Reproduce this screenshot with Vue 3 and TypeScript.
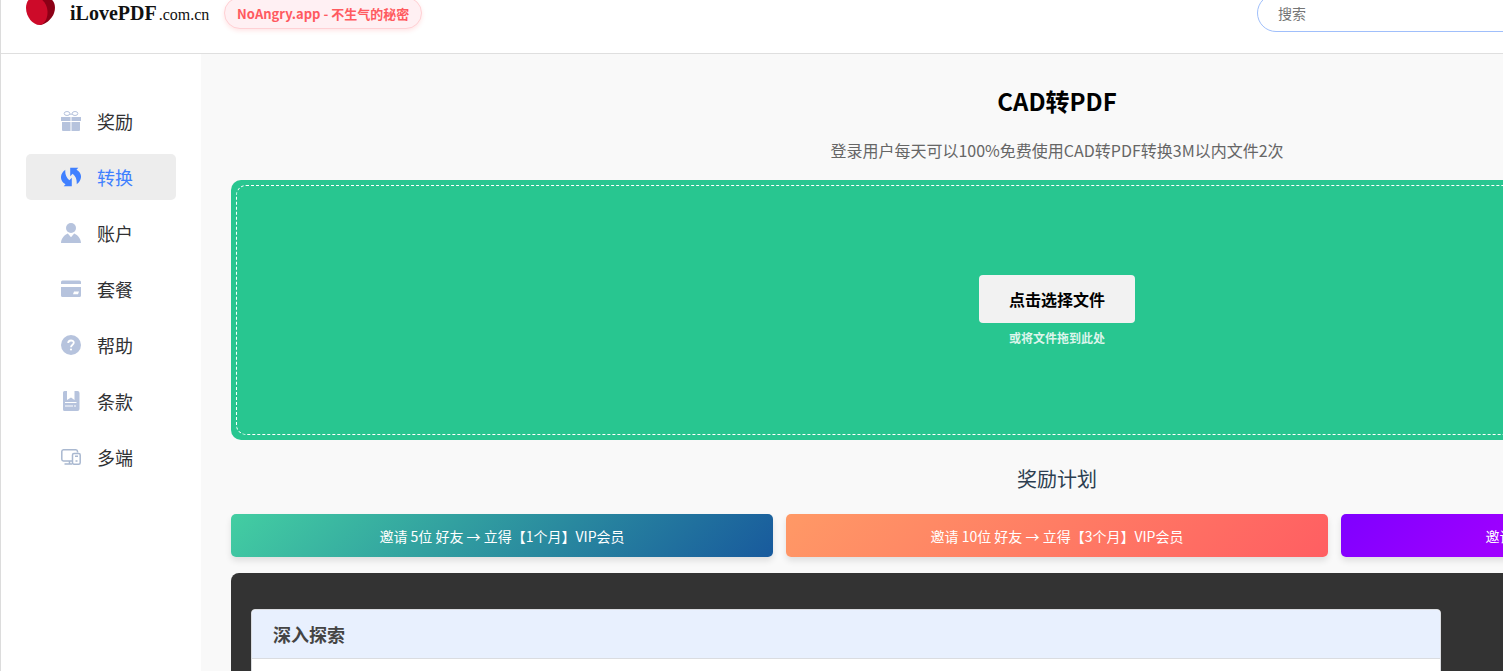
<script setup lang="ts">
import { ref } from 'vue'

interface MenuItem {
  id: string
  label: string
}

const menu: MenuItem[] = [
  { id: 'gift', label: '奖励' },
  { id: 'convert', label: '转换' },
  { id: 'user', label: '账户' },
  { id: 'card', label: '套餐' },
  { id: 'help', label: '帮助' },
  { id: 'terms', label: '条款' },
  { id: 'devices', label: '多端' },
]

const rewards = [
  { tone: 'teal', text: '邀请 5位 好友 → 立得【1个月】VIP会员' },
  { tone: 'coral', text: '邀请 10位 好友 → 立得【3个月】VIP会员' },
  { tone: 'violet', text: '邀请 20位 好友 → 立得【6个月】VIP会员' },
]

const active = ref('convert')
const keyword = ref('')
</script>

<template>
  <div class="viewport">
    <div class="page">
      <header class="header">
        <a class="brand" href="#">
          <svg class="brand-mark" viewBox="0 0 30 32" aria-hidden="true">
            <path fill="#8c0016" d="M15 6C18 3 24 3 27 7C30 11 29.500 18 26 23C23 27.500 18 30.500 14 31L10 20Z" />
            <path fill="#cd0a29" d="M0 14C0 7 4 3 9 3C15 3 21 9 21.500 17C22 25 18 31 13.500 31C7 31 0 23 0 14Z" />
          </svg>
          <span class="brand-name">iLovePDF<small>.com.cn</small></span>
        </a>
        <a class="promo" href="#">NoAngry.app - 不生气的秘密</a>
        <input v-model="keyword" class="search" type="search" placeholder="搜索" aria-label="搜索" />
      </header>

      <div class="body">
        <nav class="sidebar">
          <a
            v-for="item in menu"
            :key="item.id"
            href="#"
            class="menu-item"
            :class="{ active: item.id === active }"
            @click.prevent="active = item.id"
          >
            <svg class="menu-icon" viewBox="0 0 20 20" fill="currentColor" aria-hidden="true">
              <template v-if="item.id === 'gift'">
                <g fill="none" stroke="currentColor" stroke-width="1">
                  <ellipse cx="6" cy="2.500" rx="2.800" ry="2" />
                  <ellipse cx="14" cy="2.500" rx="2.800" ry="2" />
                  <path d="M8.500 3.200h3" />
                </g>
                <path d="M0 6h9.500v4H.500a.5.5 0 0 1-.5-.5ZM10.500 6H20v3.500a.5.5 0 0 1-.5.500h-9ZM1 11h8.500v9H2a1 1 0 0 1-1-1ZM10.500 11H19v8a1 1 0 0 1-1 1h-7.500Z" />
              </template>
              <template v-else-if="item.id === 'convert'">
                <path d="M4.300 2.700C-1.500 7-1.500 14 4.500 17.200L2.700 19.300H10.800V10.700L8.300 13.200C5 10.500 4 7 4.300 2.700Z" />
                <path d="M15.700 17.300C21.500 13 21.500 6 15.500 2.800L17.300.7H9.200V9.300L11.700 6.800C15 9.500 16 13 15.700 17.300Z" />
              </template>
              <template v-else-if="item.id === 'user'">
                <circle cx="10" cy="5" r="5" />
                <path d="M0 20C.3 15.500 3 12 6.800 10.500L10 14.200l3.200-3.700C17 12 19.700 15.500 20 20Z" />
              </template>
              <template v-else-if="item.id === 'card'">
                <path d="M0 5V3a1.500 1.500 0 0 1 1.500-1.500h17A1.500 1.500 0 0 1 20 3v2Z" />
                <path fill-rule="evenodd" d="M0 8h20v8.500a1.500 1.500 0 0 1-1.500 1.500h-17A1.500 1.500 0 0 1 0 16.500ZM13 12.500l-1 2.800h5l1-2.800Z" />
              </template>
              <template v-else-if="item.id === 'help'">
                <circle cx="10" cy="10" r="10" />
                <path fill="none" stroke="#fff" stroke-width="1.800" d="M7.200 8C7.200 4.700 12.800 4.700 12.800 7.800C12.800 9.800 10 9.800 10 12.200" />
                <circle cx="10" cy="14.500" r="1.100" fill="#fff" />
              </template>
              <template v-else-if="item.id === 'terms'">
                <path d="M3.500 0H6v9l4-2.500L13.500 9V0h3A2 2 0 0 1 18.500 2v16a2 2 0 0 1-2 2h-13A1.500 1.500 0 0 1 2 18.500v-17A1.500 1.500 0 0 1 3.500 0Z" />
                <path fill="none" stroke="#fff" stroke-width="1" d="M4 11.500h11.500M4 15h8M13 15h2" />
              </template>
              <template v-else>
                <g fill="none" stroke="#a9b8d0" stroke-width="1.500">
                  <path d="M11 14H2.500A1.800 1.800 0 0 1 .8 12.200V4.500a1.800 1.800 0 0 1 1.700-1.800h12.300A1.800 1.800 0 0 1 16.500 4.500v1M3.500 17h7.500M8.500 14v3" />
                  <rect x="11.500" y="6.500" width="7.700" height="10.700" rx="1.500" />
                  <path d="M14 9.200h3M14.500 14h2" />
                </g>
              </template>
            </svg>
            <span>{{ item.label }}</span>
          </a>
        </nav>

        <main class="content">
          <h1>CAD转PDF</h1>
          <p class="intro">登录用户每天可以100%免费使用CAD转PDF转换3M以内文件2次</p>

          <section class="dropzone">
            <div class="dropzone-inner">
              <button type="button" class="pick">点击选择文件</button>
              <p class="hint">或将文件拖到此处</p>
            </div>
          </section>

          <h2>奖励计划</h2>
          <div class="rewards">
            <a v-for="reward in rewards" :key="reward.tone" href="#" class="reward" :class="reward.tone">{{ reward.text }}</a>
          </div>

          <section class="explore">
            <article class="panel">
              <h3>深入探索</h3>
              <div class="panel-body"></div>
            </article>
          </section>
        </main>
      </div>
    </div>
  </div>
</template>

<style>
body {
  margin: 0;
  overflow: hidden;
}
</style>

<style scoped>
.viewport {
  height: 100vh;
  overflow: hidden;
  font-family: "Noto Sans CJK SC", sans-serif;
  background: #f9f9f9;
}

.page {
  min-width: 1913px;
  box-sizing: border-box;
  border-left: 1px solid #dcdcdc;
}

.page * {
  box-sizing: border-box;
}

a {
  color: inherit;
  text-decoration: none;
}

.header {
  display: flex;
  align-items: center;
  height: 81px;
  margin-top: -27px;
  padding: 0 30px 0 25px;
  border-bottom: 1px solid #dfdfdf;
  background: #fff;
}

.brand {
  display: flex;
  align-items: center;
  gap: 14px;
  width: 186px;
  margin-right: 12px;
}

.brand-mark {
  flex: none;
  width: 30px;
  height: 32px;
  margin-bottom: 6px;
}

.brand-name {
  font-family: "Liberation Serif", serif;
  font-size: 20px;
  font-weight: 700;
  color: #111;
  white-space: nowrap;
}

.brand-name small {
  margin-left: 2px;
  font-size: 16px;
  font-weight: 400;
}

.promo {
  padding: 6px 12px 4px;
  border: 1px solid #ffd0d4;
  border-radius: 20px;
  background: #fff0f3;
  box-shadow: 0 2px 4px rgba(255, 90, 95, 0.15);
  color: #ff5a5f;
  font-size: 13px;
  font-weight: 700;
  line-height: 20px;
  white-space: nowrap;
}

.search {
  width: 500px;
  height: 38px;
  margin-left: auto;
  margin-right: 126px;
  padding: 0 20px;
  border: 1px solid #a0bffb;
  border-radius: 19px;
  outline: none;
  background: #fff;
  font: 14px "Noto Sans CJK SC", sans-serif;
  color: #333;
}

.search::placeholder {
  color: #757575;
}

.body {
  display: flex;
}

.sidebar {
  display: flex;
  flex: none;
  flex-direction: column;
  gap: 10px;
  width: 200px;
  min-height: 100vh;
  padding: 44px 25px;
  background: #fff;
}

.menu-item {
  display: flex;
  align-items: center;
  gap: 16px;
  height: 46px;
  padding-left: 35px;
  border-radius: 5px;
  color: #303133;
  font-size: 18px;
}

.menu-icon {
  width: 20px;
  height: 20px;
  color: #b6c3dd;
}

.menu-item.active {
  background: #ededed;
  color: #4080ff;
}

.menu-item.active .menu-icon {
  color: #4080ff;
}

.content {
  flex: 1;
  min-width: 0;
  padding: 29px 30px;
}

h1,
h2,
h3,
p {
  margin: 0;
}

h1 {
  color: #000;
  font-size: 24px;
  font-weight: 700;
  line-height: 36px;
  text-align: center;
}

.intro {
  margin-top: 19px;
  color: #666;
  font-size: 16px;
  line-height: 24px;
  text-align: center;
}

.dropzone {
  height: 260px;
  margin-top: 18px;
  padding: 5px;
  border-radius: 10px;
  background: #28c690;
}

.dropzone-inner {
  display: flex;
  flex-direction: column;
  align-items: center;
  justify-content: center;
  gap: 6px;
  height: 100%;
  padding-top: 2px;
  border: 1px dashed #fff;
  border-radius: 10px;
}

.pick {
  height: 48px;
  padding: 0 30px;
  border: 0;
  border-radius: 4px;
  background: #f2f2f2;
  color: #000;
  font: 700 16px "Noto Sans CJK SC", sans-serif;
}

.hint {
  color: #dcf5eb;
  font-size: 12px;
  font-weight: 700;
  line-height: 18px;
}

h2 {
  margin-top: 24px;
  color: #2c3e50;
  font-size: 20px;
  font-weight: 400;
  line-height: 30px;
  text-align: center;
}

.rewards {
  display: grid;
  grid-template-columns: repeat(3, 1fr);
  gap: 13px;
  margin-top: 20px;
}

.reward {
  padding: 11px 10px 9px;
  border-radius: 5px;
  box-shadow: 0 4px 6px rgba(0, 0, 0, 0.1);
  color: #fff;
  font-size: 14px;
  line-height: 23px;
  text-align: center;
}

.teal {
  background: linear-gradient(135deg, #43cea2, #185a9d);
}

.coral {
  background: linear-gradient(135deg, #ff9966, #ff5e62);
}

.violet {
  background: linear-gradient(135deg, #7f00ff, #e100ff);
}

.explore {
  margin-top: 16px;
  padding: 36px 20px;
  border-radius: 8px;
  background: #333;
}

.panel {
  max-width: 1190px;
  overflow: hidden;
  border: 1px solid #dadce0;
  border-radius: 4px;
  background: #fff;
}

h3 {
  padding: 10px 21px 9px;
  border-bottom: 1px solid #dadce0;
  background: #e8f0fe;
  color: #444;
  font-size: 18px;
  font-weight: 700;
  line-height: 29px;
}

.panel-body {
  min-height: 100px;
}
</style>
